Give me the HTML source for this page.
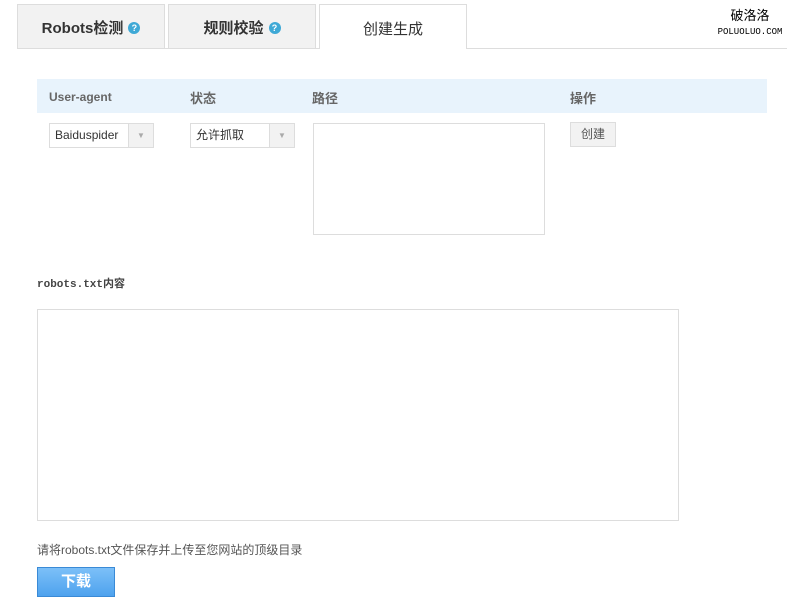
<!DOCTYPE html>
<html><head><meta charset="utf-8"><style>
*{margin:0;padding:0;box-sizing:border-box}
body{width:794px;height:604px;background:#fff;font-family:"Liberation Sans","Noto Sans CJK SC",sans-serif;position:relative;overflow:hidden;color:#333}
.a{position:absolute}
.tab{position:absolute;top:4px;height:44px;background:#f2f2f2;border:1px solid #ddd;border-bottom:none;font-size:15px;font-weight:bold;display:flex;align-items:center;justify-content:center;color:#333;padding-top:2px}
.q{display:inline-block;width:12px;height:12px;border-radius:50%;background:#3fa9d6;color:#fff;font-size:9px;line-height:12px;text-align:center;margin-left:5px}
.sel{position:absolute;top:123px;height:25px;border:1px solid #ddd;font-size:12px;line-height:23px;padding-left:5px;background:#fff}
.sel .ar{position:absolute;right:0;top:0;width:25px;height:23px;background:#f2f2f2;border-left:1px solid #ddd;color:#aaa;font-size:8px;text-align:center}
</style></head><body>
<div class="a" style="left:17px;top:48px;width:770px;height:1px;background:#ddd"></div>
<div class="tab" style="left:17px;width:148px">Robots检测<span class="q">?</span></div>
<div class="tab" style="left:168px;width:148px">规则校验<span class="q">?</span></div>
<div class="tab" style="left:319px;width:148px;top:4px;height:45px;background:#fff;font-weight:normal">创建生成</div>
<div class="a" style="left:712px;top:9px;width:76px;text-align:center;font-size:13px;color:#000;line-height:14px">破洛洛<br><span style="font-size:9px;font-family:'Liberation Mono',monospace">POLUOLUO.COM</span></div>
<div class="a" style="left:37px;top:79px;width:730px;height:34px;background:#e8f3fc"></div>
<div class="a" style="left:49px;top:89px;font-size:12px;font-weight:bold;color:#666;line-height:15px;top:90px">User-agent</div>
<div class="a" style="left:190px;top:88px;font-size:13px;font-weight:bold;color:#666">状态</div>
<div class="a" style="left:312px;top:88px;font-size:13px;font-weight:bold;color:#666">路径</div>
<div class="a" style="left:570px;top:88px;font-size:13px;font-weight:bold;color:#666">操作</div>
<div class="sel" style="left:49px;width:105px">Baiduspider<span class="ar">▼</span></div>
<div class="sel" style="left:190px;width:105px">允许抓取<span class="ar">▼</span></div>
<div class="a" style="left:313px;top:123px;width:232px;height:112px;border:1px solid #ddd"></div>
<div class="a" style="left:570px;top:122px;width:46px;height:25px;border:1px solid #ddd;background:#f2f2f2;font-size:12px;text-align:center;line-height:23px;color:#555">创建</div>
<div class="a" style="left:37px;top:275px;font-size:11px;font-weight:bold;font-family:'Liberation Mono','Noto Sans CJK SC',monospace;color:#444">robots.txt内容</div>
<div class="a" style="left:37px;top:309px;width:642px;height:212px;border:1px solid #ddd"></div>
<div class="a" style="left:37px;top:541px;font-size:12px;color:#555">请将robots.txt文件保存并上传至您网站的顶级目录</div>
<div class="a" style="left:37px;top:567px;width:78px;height:30px;background:linear-gradient(#7cc0f8,#4ea2ee);border:1px solid #3a8ad6;color:#fff;font-size:15px;font-weight:bold;text-align:center;line-height:28px">下载</div>
</body></html>
